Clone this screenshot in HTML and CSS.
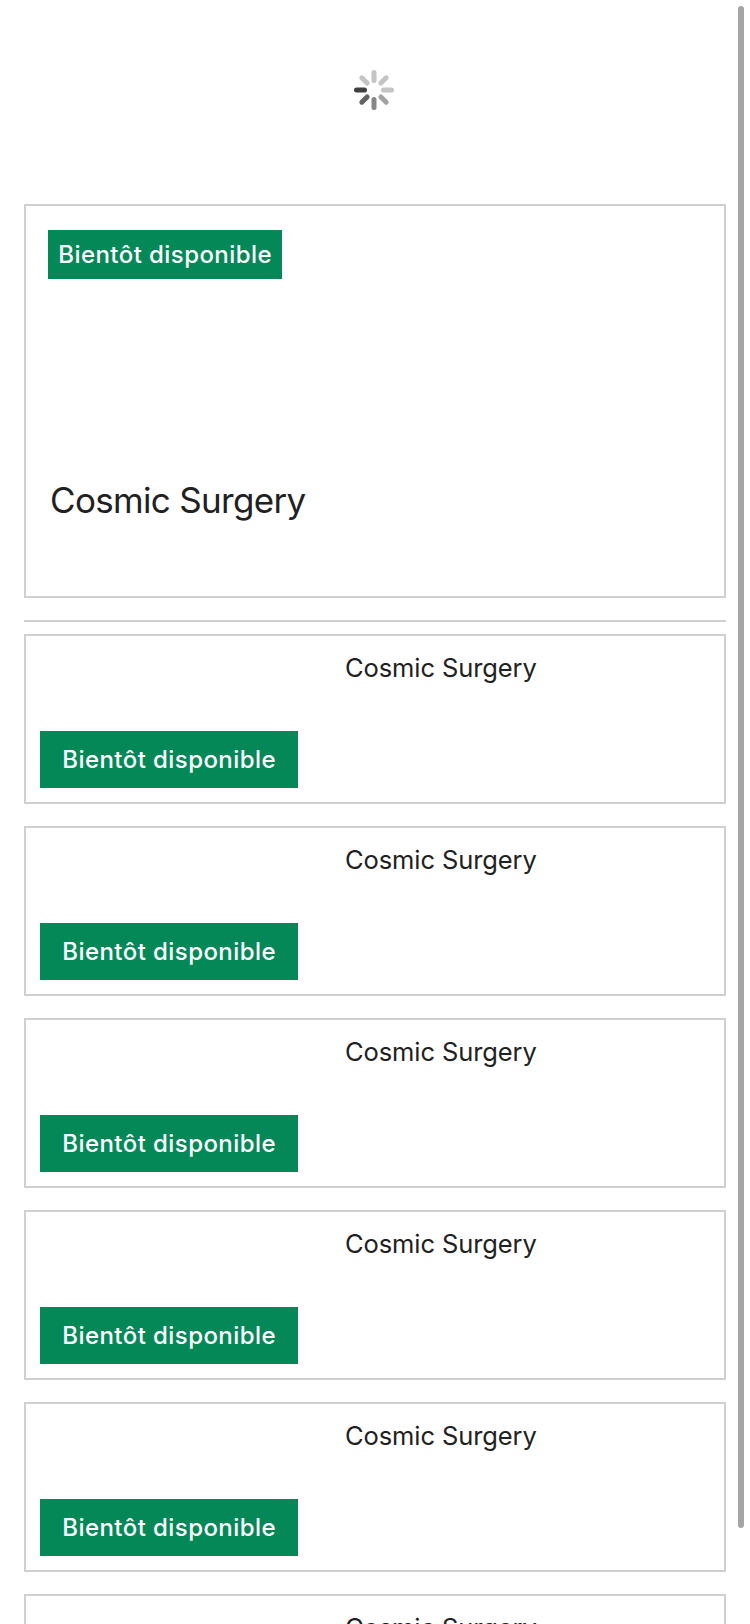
FILE: index.html
```
<!DOCTYPE html>
<html lang="fr">
<head>
<meta charset="utf-8">
<title>Cosmic Surgery</title>
<link rel="stylesheet" href="styles.css">
</head>
<body>
<main class="page">
  <div class="loader">
    <svg class="spinner" viewBox="-20 -20 40 40" role="img" aria-label="Chargement">
      <g fill="none" stroke-width="5" stroke-linecap="round">
        <path stroke="#c4c4c4" d="M0-17.5V-9.5M17.5 0H9.5M12.2-12.2L6.9-6.9M-12.2-12.2L-6.9-6.9"/>
        <path stroke="#a3a3a3" d="M12.2 12.2L6.9 6.9"/>
        <path stroke="#868686" d="M0 17.5V9.5"/>
        <path stroke="#646464" d="M-12.2 12.2L-6.9 6.9"/>
        <path stroke="#414141" d="M-17.5 0H-9.5"/>
      </g>
    </svg>
  </div>
  <article class="feature">
    <span class="badge badge-feature">Bientôt disponible</span>
    <h1 class="feature-title">Cosmic Surgery</h1>
  </article>
  <hr class="divider">
  <section class="list">
    <article class="card"><div class="media"><span class="badge">Bientôt disponible</span></div><h2 class="title">Cosmic Surgery</h2></article>
    <article class="card"><div class="media"><span class="badge">Bientôt disponible</span></div><h2 class="title">Cosmic Surgery</h2></article>
    <article class="card"><div class="media"><span class="badge">Bientôt disponible</span></div><h2 class="title">Cosmic Surgery</h2></article>
    <article class="card"><div class="media"><span class="badge">Bientôt disponible</span></div><h2 class="title">Cosmic Surgery</h2></article>
    <article class="card"><div class="media"><span class="badge">Bientôt disponible</span></div><h2 class="title">Cosmic Surgery</h2></article>
    <article class="card"><div class="media"></div><h2 class="title">Cosmic Surgery</h2></article>
  </section>
</main>
<div class="scrollbar"></div>
</body>
</html>
```
FILE: styles.css
```
* { box-sizing: border-box; }
body {
  margin: 0;
  height: 1624px;
  overflow: hidden;
  background: #fff;
  color: #212121;
  font-family: Inter, "Liberation Sans", sans-serif;
}
.page { height: 1624px; padding: 0 24px; overflow: hidden; }
.loader {
  height: 204px;
  padding-top: 70px;
  display: flex;
  justify-content: center;
  align-items: flex-start;
}
.spinner { width: 40px; height: 40px; margin-right: 2px; }
.feature {
  height: 394px;
  border: 2px solid #d0d0d0;
  padding: 24px 22px;
  display: flex;
  flex-direction: column;
  align-items: flex-start;
}
.badge {
  width: 258px;
  height: 57px;
  padding-left: 22.3px;
  background: #048858;
  color: #fff;
  font-size: 24px;
  font-weight: 550;
  line-height: 57px;
  letter-spacing: 0.43px;
  white-space: nowrap;
}
.badge-feature { width: 234px; height: 49px; line-height: 49px; padding-left: 10.3px; }
.feature-title {
  margin: 199px 0 0 2px;
  font-size: 35px;
  font-weight: 400;
  line-height: 44px;
  letter-spacing: -0.68px;
}
.divider { height: 2px; margin: 22px 0 12px; border: 0; background: #d0d0d0; }
.list { display: flex; flex-direction: column; gap: 22px; }
.card {
  height: 170px;
  flex: none;
  border: 2px solid #d0d0d0;
  padding: 14px;
  display: grid;
  grid-template-columns: 305px 1fr;
}
.media { display: flex; align-items: flex-end; }
.title {
  margin: 2px 0 0;
  font-size: 25.5px;
  font-weight: 400;
  line-height: 32px;
  letter-spacing: -0.1px;
}
.scrollbar {
  position: absolute;
  top: 6px;
  right: 6px;
  width: 6px;
  height: 1522px;
  border-radius: 3px;
  background: #a5a5a4;
}
```
